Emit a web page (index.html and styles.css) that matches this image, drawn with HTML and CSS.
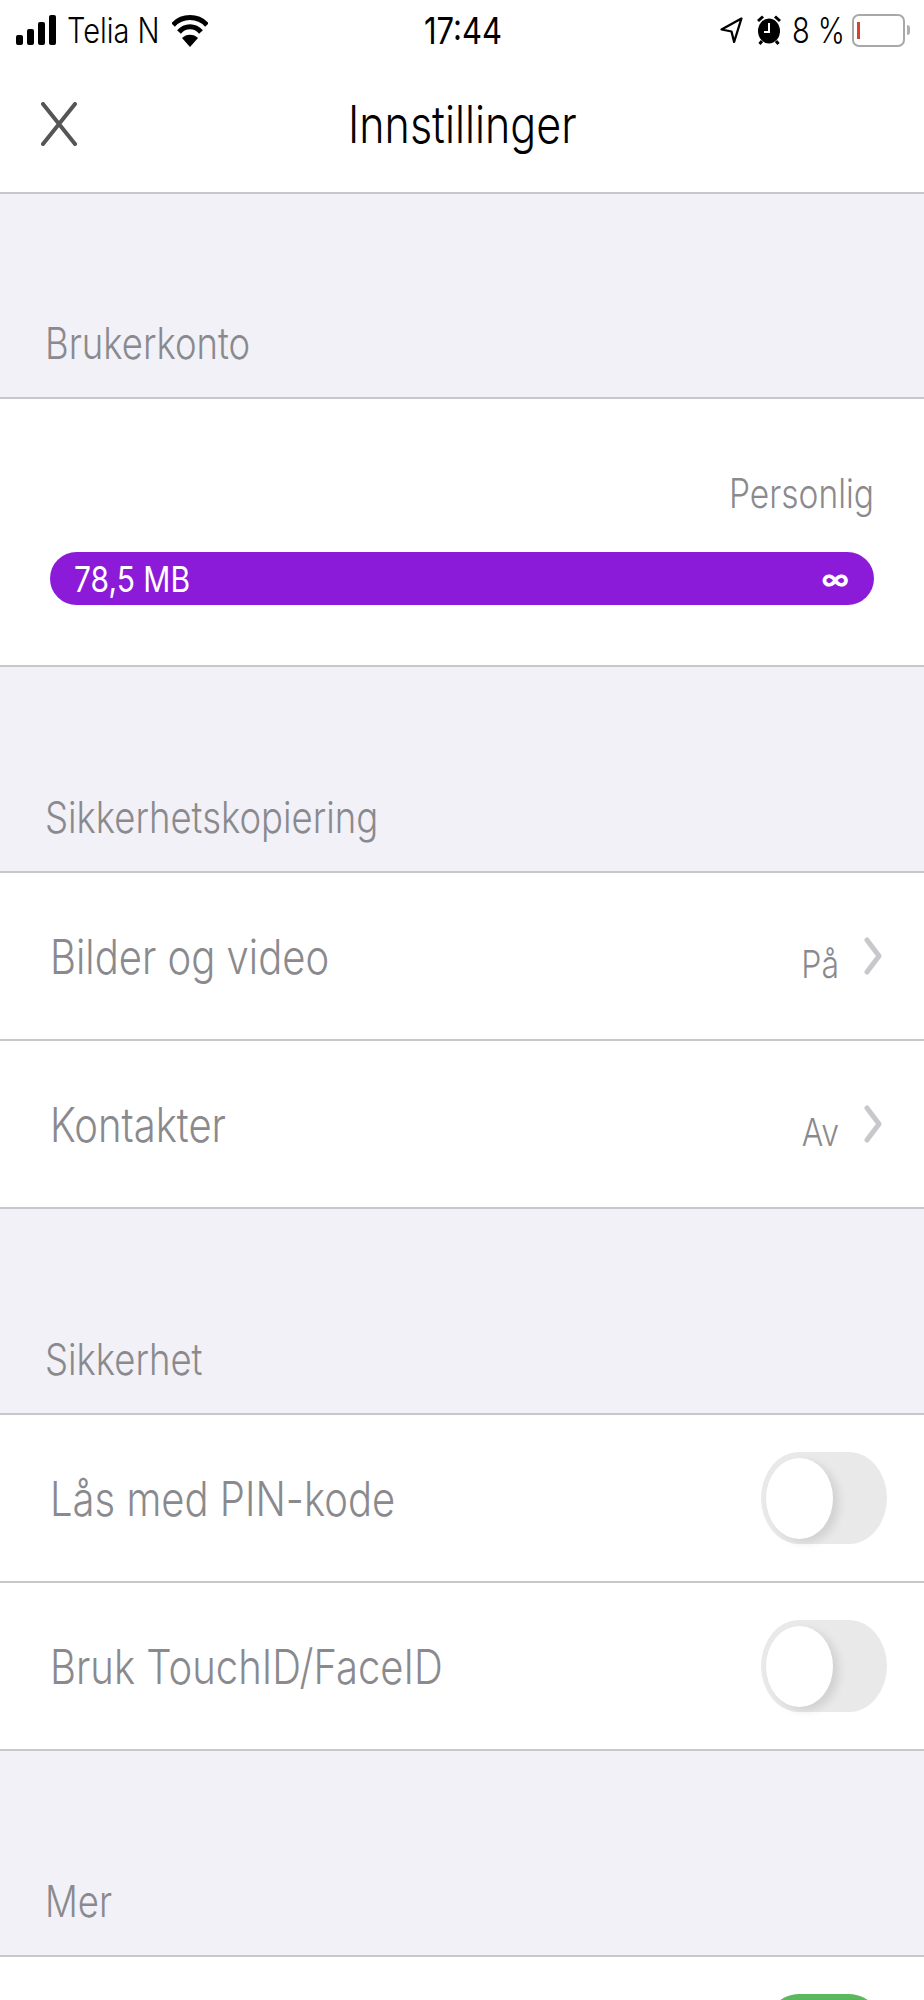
FILE: index.html
```html
<!DOCTYPE html>
<html>
<head>
    <meta charset="utf-8">
    <title>Innstillinger</title>
    <link rel="stylesheet" href="styles.css">
</head>
<body>
    <div class="status-bar">
        <div class="status-left">
            <svg class="signal" width="41" height="30" viewBox="0 0 41 30">
                <rect x="0" y="20" width="7" height="10" rx="2"/>
                <rect x="11" y="14" width="7" height="16" rx="2"/>
                <rect x="22" y="7" width="7" height="23" rx="2"/>
                <rect x="33" y="0" width="7" height="30" rx="2"/>
            </svg>
            <span class="carrier"><span class="tall">Telia N</span></span>
            <svg class="wifi" width="36" height="33" viewBox="0 0 36 33">
                <path d="M1 11C10 1 26 1 35 11" fill="none" stroke="#000" stroke-width="5"/>
                <path d="M7 18C13 11 23 11 29 18" fill="none" stroke="#000" stroke-width="5"/>
                <path d="M18 33L10 24C14 19.500 22 19.500 26 24Z"/>
            </svg>
        </div>
        <div class="clock"><span class="tall">17:44</span></div>
        <div class="status-right">
            <svg class="arrow" width="23" height="27" viewBox="0 0 22 27" preserveAspectRatio="none">
                <path d="M20.500 1.500L1.500 12.500L11 14.500L13.500 25Z" fill="none" stroke="#000" stroke-width="2.200" stroke-linejoin="round"/>
            </svg>
            <svg class="alarm" width="24" height="30" viewBox="0 0 24 30">
                <path d="M1 6L6 1.500M23 6L18 1.500M5 26L2.500 29M19 26L21.500 29" fill="none" stroke="#000" stroke-width="3"/>
                <ellipse cx="12" cy="16" rx="11" ry="12.500"/>
                <path d="M12 8V17H7" fill="none" stroke="#fff" stroke-width="2"/>
            </svg>
            <span class="percent"><span class="tall">8 %</span></span>
            <div class="battery"><div class="battery-level"></div></div>
            <div class="battery-nub"></div>
        </div>
    </div>

    <div class="nav-bar">
        <svg class="close" width="36" height="44" viewBox="0 0 36 44">
            <path d="M2 2L34 42M34 2L2 42" fill="none" stroke="#555" stroke-width="4" stroke-linecap="round"/>
        </svg>
        <div class="nav-title"><span class="tall">Innstillinger</span></div>
    </div>

    <div class="section-head first"><span class="tall">Brukerkonto</span></div>
    <div class="account">
        <div class="plan"><span class="tall">Personlig</span></div>
        <div class="usage-bar">
            <span class="tall">78,5 MB</span>
            <span class="infinity">∞</span>
        </div>
    </div>

    <div class="section-head"><span class="tall">Sikkerhetskopiering</span></div>
    <div class="row">
        <span class="row-label"><span class="tall">Bilder og video</span></span>
        <span class="row-value tall">På</span>
        <svg class="chevron" width="18" height="38" viewBox="0 0 18 38">
            <path d="M3 3L15 19L3 35" fill="none" stroke="#c7c7cc" stroke-width="5" stroke-linecap="round" stroke-linejoin="round"/>
        </svg>
    </div>
    <div class="row">
        <span class="row-label"><span class="tall">Kontakter</span></span>
        <span class="row-value tall">Av</span>
        <svg class="chevron" width="18" height="38" viewBox="0 0 18 38">
            <path d="M3 3L15 19L3 35" fill="none" stroke="#c7c7cc" stroke-width="5" stroke-linecap="round" stroke-linejoin="round"/>
        </svg>
    </div>

    <div class="section-head"><span class="tall">Sikkerhet</span></div>
    <div class="row">
        <span class="row-label"><span class="tall">Lås med PIN-kode</span></span>
        <div class="toggle"><div class="knob"></div></div>
    </div>
    <div class="row">
        <span class="row-label"><span class="tall">Bruk TouchID/FaceID</span></span>
        <div class="toggle"><div class="knob"></div></div>
    </div>

    <div class="section-head"><span class="tall">Mer</span></div>
    <div class="row">
        <div class="toggle on"><div class="knob"></div></div>
    </div>
</body>
</html>
```

FILE: styles.css
```css
html, body {
    height: 2000px;
    overflow: hidden;
}

body {
    margin: 0;
    background: #f1f1f7;
    font-family: Inter, Roboto, "Liberation Sans", sans-serif;
    font-weight: 300;
    color: #8a8a8e;
}

/* the screenshot is stretched vertically */
.tall {
    display: inline-block;
    transform: scaleY(1.2);
}

.status-bar {
    display: grid;
    grid-template-columns: 1fr auto 1fr;
    align-items: center;
    height: 60px;
    padding: 0 14px 0 16px;
    background: white;
    color: #000;
}

.status-left,
.status-right {
    display: flex;
    align-items: center;
}

.status-right {
    justify-content: flex-end;
}

.carrier {
    margin-left: 10px;
    font-size: 29px;
}

.wifi {
    margin-left: 12px;
}

.clock {
    font-size: 31px;
    font-weight: 400;
}

.alarm {
    margin-left: 14px;
}

.percent {
    margin-left: 11px;
    font-size: 29px;
}

.battery {
    box-sizing: border-box;
    width: 53px;
    height: 33px;
    margin-left: 7px;
    padding: 6px 3px;
    border: 2px solid #a8a8a8;
    border-radius: 7px;
}

.battery-level {
    width: 3px;
    height: 100%;
    background: #d8402f;
}

.battery-nub {
    width: 3px;
    height: 10px;
    margin-left: 2px;
    background: #b0b0b0;
    border-radius: 0 3px 3px 0;
}

.nav-bar {
    box-sizing: border-box;
    display: flex;
    align-items: center;
    height: 134px;
    padding: 0 0 4px 41px;
    background: white;
    border-bottom: 2px solid #c8c7cc;
}

.nav-title {
    margin-left: 271px;
    font-size: 43px;
    color: #000;
}

.section-head {
    box-sizing: border-box;
    display: flex;
    align-items: flex-end;
    height: 206px;
    padding: 0 0 30px 45px;
    border-bottom: 2px solid #c8c7cc;
    font-size: 36.500px;
    line-height: 48px;
}

.section-head.first {
    height: 205px;
}

.account {
    box-sizing: border-box;
    height: 268px;
    padding: 71px 50px 0 50px;
    background: white;
    border-bottom: 2px solid #c8c7cc;
}

.plan {
    text-align: right;
    font-size: 33.500px;
    line-height: 48px;
}

.usage-bar {
    display: flex;
    justify-content: space-between;
    align-items: center;
    height: 53px;
    margin-top: 34px;
    padding: 0 25px 0 24px;
    background: #8c1bd9;
    border-radius: 27px;
    color: white;
    font-size: 30px;
    font-weight: 400;
}

.infinity {
    font-size: 28px;
    font-weight: 700;
}

.row {
    box-sizing: border-box;
    display: flex;
    align-items: center;
    height: 168px;
    padding: 0 37px 0 50px;
    background: white;
    border-bottom: 2px solid #c8c7cc;
}

.row-label {
    flex: 1;
    font-size: 40px;
}

.row-value {
    margin-top: 16px;
    font-size: 32px;
}

.chevron {
    margin-left: 25px;
    margin-right: 5px;
}

.toggle {
    box-sizing: border-box;
    display: flex;
    align-items: center;
    width: 126px;
    height: 92px;
    padding: 0 5px;
    background: #e9e9ea;
    border-radius: 38px / 46px;
}

.knob {
    width: 67px;
    height: 81px;
    background: white;
    border-radius: 50%;
    box-shadow: 6px 4px 9px rgba(0, 0, 0, 0.1);
}

.toggle.on {
    margin-left: auto;
    justify-content: flex-end;
    background: #5cb85c;
}
```
